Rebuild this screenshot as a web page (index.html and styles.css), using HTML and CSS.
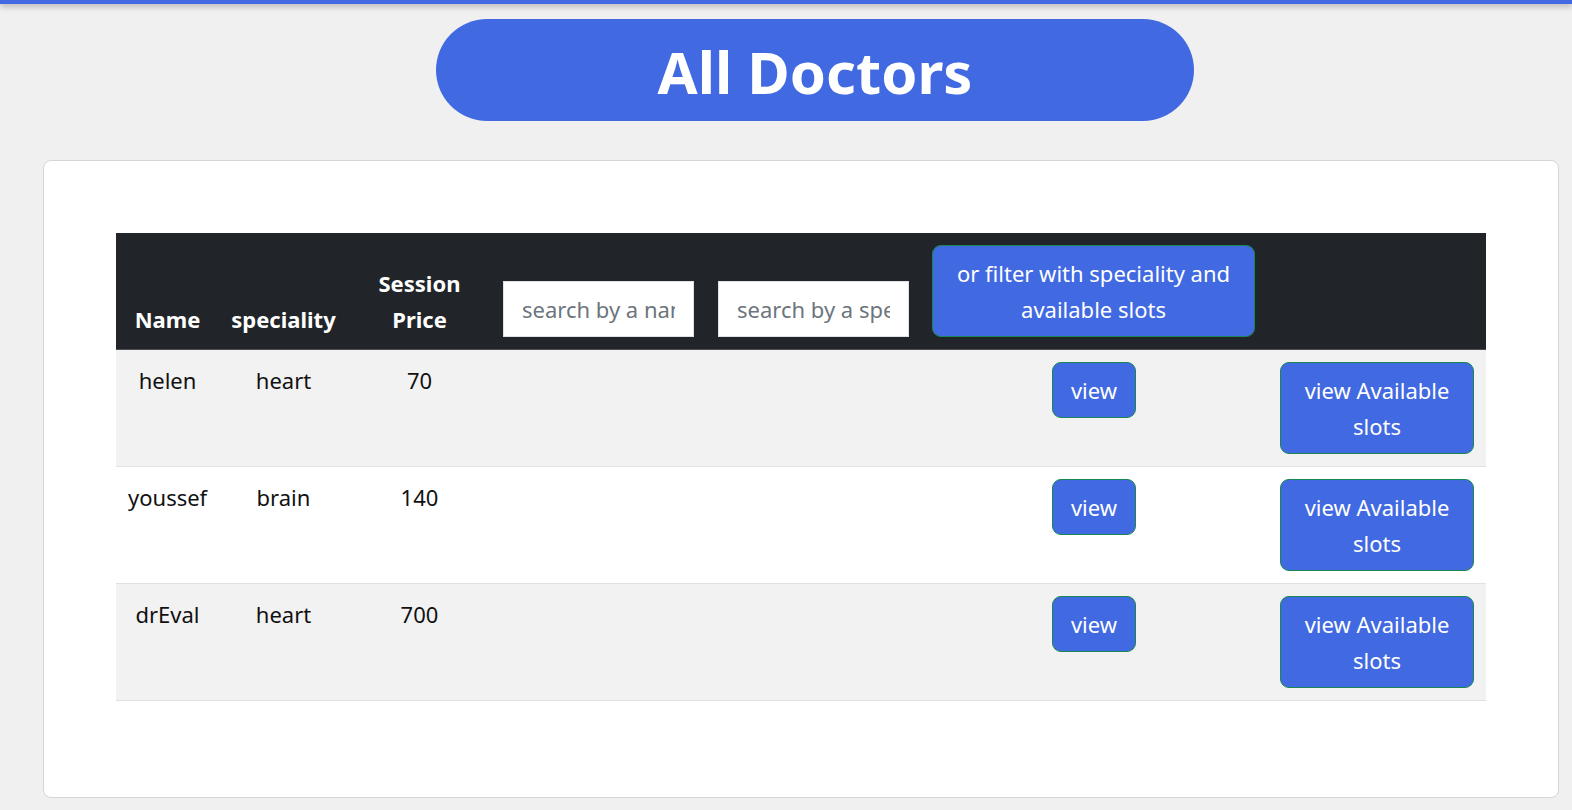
FILE: index.html
```html
<!DOCTYPE html>
<html lang="en">
<head>
<meta charset="utf-8">
<title>All Doctors</title>
<link rel="stylesheet" href="styles.css">
</head>
<body>
<div class="topbar"></div>
<div class="title-wrap">
  <h1 class="title">All Doctors</h1>
</div>
<div class="card">
  <table class="doctors">
    <colgroup>
      <col class="c-name"><col class="c-spec"><col class="c-price"><col class="c-in1"><col class="c-in2"><col class="c-filter"><col class="c-slots">
    </colgroup>
    <thead>
      <tr>
        <th>Name</th>
        <th>speciality</th>
        <th>Session Price</th>
        <th><input class="search" type="text" placeholder="search by a name"></th>
        <th><input class="search" type="text" placeholder="search by a speciality"></th>
        <th><button class="btn btn-filter">or filter with speciality and available slots</button></th>
        <th></th>
      </tr>
    </thead>
    <tbody>
      <tr class="odd">
        <td>helen</td><td>heart</td><td>70</td><td></td><td></td>
        <td><button class="btn">view</button></td>
        <td><button class="btn btn-slots">view Available slots</button></td>
      </tr>
      <tr>
        <td>youssef</td><td>brain</td><td>140</td><td></td><td></td>
        <td><button class="btn">view</button></td>
        <td><button class="btn btn-slots">view Available slots</button></td>
      </tr>
      <tr class="odd">
        <td>drEval</td><td>heart</td><td>700</td><td></td><td></td>
        <td><button class="btn">view</button></td>
        <td><button class="btn btn-slots">view Available slots</button></td>
      </tr>
    </tbody>
  </table>
</div>
</body>
</html>
```
FILE: styles.css
```css
* { box-sizing: border-box; }
html, body { margin: 0; padding: 0; }
body {
  background: #f0f0f0;
  font-family: "Noto Sans", "Open Sans", sans-serif;
  font-size: 22px;
  line-height: 36px;
  color: #212529;
  height: 810px;
  overflow: hidden;
}
.topbar {
  height: 4px;
  background: #4169e1;
  box-shadow: 0 2px 6px rgba(0,0,0,0.35);
}
.title-wrap {
  margin: 15px 0 0 436px;
  width: 758px;
  height: 102px;
  background: #4169e1;
  border-radius: 51px;
  display: flex;
  align-items: center;
  justify-content: center;
}
.title {
  margin: 0;
  color: #fff;
  font-size: 58px;
  line-height: 1;
  font-weight: 700;
  position: relative;
  top: 2px;
}
.card {
  margin: 39px 13px 0 43px;
  height: 638px;
  background: #fff;
  border: 1px solid #d6d6d6;
  border-radius: 8px;
  padding: 72px 72px 0 72px;
}
.doctors {
  width: 1370px;
  border-collapse: collapse;
  table-layout: fixed;
  text-align: center;
}
.c-name { width: 103px; }
.c-spec { width: 129px; }
.c-price { width: 143px; }
.c-in1 { width: 215px; }
.c-in2 { width: 214px; }
.c-filter { width: 348px; }
.c-slots { width: 218px; }
.doctors th, .doctors td {
  padding: 12px;
}
.doctors thead th {
  background: #212529;
  color: #fff;
  font-weight: 700;
  vertical-align: bottom;
  border-bottom: 1px solid #4a4e52;
}
.doctors tbody td {
  vertical-align: top;
  border-bottom: 1px solid #dee2e6;
  color: #111;
}
.doctors tbody tr { background: #fff; }
.doctors tbody tr.odd { background: #f2f2f2; }
.search {
  display: block;
  width: 191px;
  height: 56px;
  padding: 9px 18px;
  border: 1px solid #dee2e6;
  border-radius: 0;
  background: #fff;
  font-family: inherit;
  font-size: 22px;
  line-height: 36px;
  color: #212529;
}
.search::placeholder { color: #6c757d; }
.btn {
  font-family: inherit;
  font-size: 22px;
  line-height: 36px;
  color: #fff;
  background: #4169e1;
  border: 1px solid #198754;
  border-radius: 9px;
  padding: 9px 18px;
  margin: 0;
  vertical-align: top;
}
.btn-filter {
  width: 323px;
  display: block;
}
.btn-slots {
  width: 194px;
}
```
